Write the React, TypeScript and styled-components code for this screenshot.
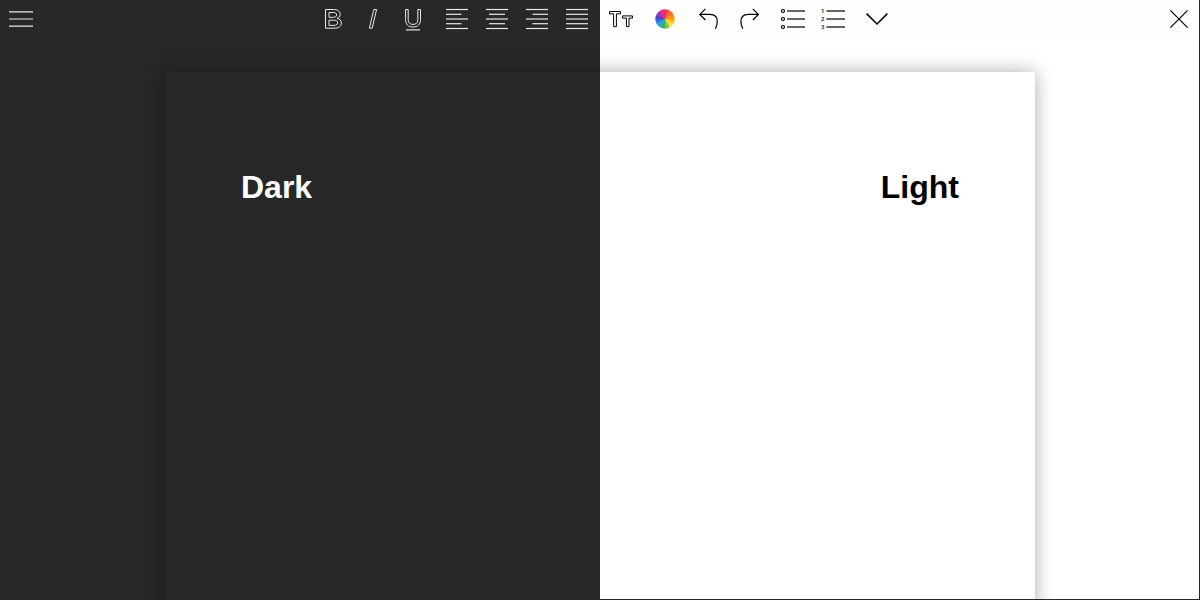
import React from "react";
import styled, { createGlobalStyle, ThemeProvider } from "styled-components";

const dark = { paper: "#282828", bar: "#282828", ink: "#ffffff", icon: "#e8e8e8" };
const light = { paper: "#ffffff", bar: "#fefefe", ink: "#000000", icon: "#000000" };

const GlobalStyle = createGlobalStyle`
  * { box-sizing: border-box; }
  body {
    margin: 0;
    background: #282828;
    font-family: "Liberation Sans", Arial, sans-serif;
  }
`;

const Split = styled.main`
  display: grid;
  grid-template-columns: 1fr 1fr;
  min-height: 100vh;
`;

const Pane = styled.section<{ $side: "start" | "end" }>`
  display: flex;
  flex-direction: column;
  overflow: hidden;
  background: ${({ theme }) => theme.paper};
  border: solid #282828;
  border-width: ${({ $side }) => ($side === "end" ? "0 1px 1px 0" : "0")};
`;

const Toolbar = styled.div<{ $side: "start" | "end" }>`
  display: flex;
  justify-content: space-between;
  padding: ${({ $side }) => ($side === "end" ? "0 0 2px 1px" : "0 3px 2px 1px")};
  background: ${({ theme }) => theme.bar};
`;

const Tools = styled.div`
  display: flex;
  gap: 4px;
`;

const Group = styled.div`
  display: flex;
`;

const ToolButton = styled.button`
  display: flex;
  align-items: center;
  justify-content: center;
  width: 40px;
  height: 38px;
  padding: 0;
  border: 0;
  background: transparent;
  color: ${({ theme }) => theme.icon};
  cursor: pointer;
`;

const Glyph = styled.svg`
  width: 24px;
  height: 24px;
  overflow: visible;
  fill: none;
  stroke: currentColor;
  stroke-width: 1.2;
`;

/* The sheet runs 40px past the split and the bottom edge, so its shadow shows only on the outer sides. */
const Sheet = styled.article<{ $side: "start" | "end" }>`
  flex: 1;
  align-self: ${({ $side }) => ($side === "start" ? "flex-end" : "flex-start")};
  width: 100%;
  max-width: 475px;
  margin: ${({ $side }) => ($side === "start" ? "32px -40px -40px 0" : "32px 0 -40px -40px")};
  padding: ${({ $side }) => ($side === "start" ? "76px 116px 76px 76px" : "76px 76px 76px 116px")};
  background: ${({ theme }) => theme.paper};
  box-shadow: 0 0 18px rgba(0, 0, 0, 0.33);
  text-align: ${({ $side }) => $side};
`;

const Title = styled.h1`
  margin: 21px 0;
  color: ${({ theme }) => theme.ink};
  font-size: 32px;
  font-weight: 700;
  line-height: 37px;
`;

const Digit = styled.text`
  fill: currentColor;
  stroke: none;
  font-family: "Open Sans", sans-serif;
  font-size: 6px;
  font-weight: 600;
`;

type ToolProps = { label: string; children: React.ReactNode };

const Tool = ({ label, children }: ToolProps) => (
  <ToolButton type="button" aria-label={label} title={label}>
    <Glyph viewBox="0 0 24 24" aria-hidden="true">{children}</Glyph>
  </ToolButton>
);

const alignRows = [2.5, 7.3, 12, 16.7, 21.5];
const alignments = [
  { label: "Align left", from: 1, to: 16.5 },
  { label: "Align center", from: 4, to: 20 },
  { label: "Align right", from: 7.5, to: 23 },
  { label: "Justify", from: 1, to: 23 },
];

const wheelColors = [
  "#f4433c", "#ff6a2a", "#ff930f", "#ffb90b", "#ffe03b", "#8bc34a",
  "#35b158", "#1aa5e0", "#2f76e4", "#5a40c0", "#9a30b8", "#e8296f",
];

const wedge = (index: number) => {
  const point = (step: number) => {
    const angle = (step * Math.PI) / 6 - Math.PI / 2;
    return `${12 + 9.5 * Math.cos(angle)} ${12 + 9.5 * Math.sin(angle)}`;
  };
  return `M12 12L${point(index)}A9.5 9.5 0 0 1 ${point(index + 1)}Z`;
};

const listRows = [4, 12, 20];

const DarkPane = () => (
  <ThemeProvider theme={dark}>
    <Pane $side="start">
      <Toolbar $side="start">
        <Tool label="Menu"><path d="M0 4.8H24M0 12H24M0 19.2H24" /></Tool>
        <Tools>
          <Group>
            <Tool label="Bold">
              <g strokeWidth="1">
                <path d="M4.5 2.5H12.3C16.8 2.5 19.2 4.2 19.2 7.2C19.2 9.4 18 10.8 16 11.4C18.8 11.9 20.3 13.5 20.3 16C20.3 19.4 17.6 21.2 13 21.2H4.5Z" />
                <path d="M8 5.5H12.2C14.6 5.5 15.6 6.3 15.6 7.9C15.6 9.5 14.6 10.3 12.2 10.3H8ZM8 13.2H12.6C15.4 13.2 16.6 14 16.6 15.8C16.6 17.6 15.4 18.4 12.6 18.4H8Z" />
              </g>
            </Tool>
            <Tool label="Italic"><path d="M12.8 2.5H15.6L11.2 21.2H8.4Z" strokeWidth="1" /></Tool>
            <Tool label="Underline">
              <path
                d="M4.6 2.5H7.2V12.5C7.2 15.8 8.9 17.4 12 17.4S16.8 15.8 16.8 12.5V2.5H19.5V12.5C19.5 17.4 16.9 20 12 20S4.6 17.4 4.6 12.5Z"
                strokeWidth="1"
              />
              <path d="M5 22.9H19" />
            </Tool>
          </Group>
          <Group>
            {alignments.map(({ label, from, to }) => (
              <Tool key={label} label={label}>
                {alignRows.map((y, i) => (
                  <path key={y} d={i % 2 ? `M${from} ${y}H${to}` : `M1 ${y}H23`} />
                ))}
              </Tool>
            ))}
          </Group>
        </Tools>
      </Toolbar>
      <Sheet $side="start"><Title>Dark</Title></Sheet>
    </Pane>
  </ThemeProvider>
);

const LightPane = () => (
  <ThemeProvider theme={light}>
    <Pane $side="end">
      <Toolbar $side="end">
        <Tools>
          <Tool label="Text size">
            <path
              d="M.5 4.5H11.5V6.8H7.4V19.7H4.6V6.8H.5ZM13.5 8.9H23.5V11.1H20V19.7H17.4V11.1H13.5Z"
              strokeWidth="1"
            />
          </Tool>
          <Tool label="Color">
            {wheelColors.map((color, i) => (
              <path key={color} d={wedge(i)} fill={color} stroke={color} strokeWidth="0.3" />
            ))}
          </Tool>
          <Group>
            <Tool label="Undo">
              <path d="M8.4 1.8L2.8 7.4L8.4 13M2.8 7.4H13C18 7.4 20.3 10.6 20.3 14.6C20.3 17.4 19.6 19.6 18.4 21.8" />
            </Tool>
            <Tool label="Redo">
              <path d="M15.8 1.8L21.4 7.4L15.8 13M21.4 7.4H11.2C6.2 7.4 3.9 10.6 3.9 14.6C3.9 17.4 4.6 19.6 5.8 21.8" />
            </Tool>
          </Group>
          <Group>
            <Tool label="Bulleted list">
              {listRows.map((y) => (
                <React.Fragment key={y}>
                  <circle cx="2" cy={y} r="1.5" />
                  <path d={`M6 ${y}H24`} />
                </React.Fragment>
              ))}
            </Tool>
            <Tool label="Numbered list">
              {listRows.map((y, i) => (
                <React.Fragment key={y}>
                  <Digit x="0" y={y + 1.5}>{i + 1}</Digit>
                  <path d={`M5.4 ${y}H24`} />
                </React.Fragment>
              ))}
            </Tool>
          </Group>
          <Tool label="More"><path d="M1.6 6.6L12 17L22.4 6.6" strokeWidth="1.5" /></Tool>
        </Tools>
        <Tool label="Close"><path d="M3.4 3.4L20.6 20.6M20.6 3.4L3.4 20.6" /></Tool>
      </Toolbar>
      <Sheet $side="end"><Title>Light</Title></Sheet>
    </Pane>
  </ThemeProvider>
);

export default function App() {
  return (
    <>
      <GlobalStyle />
      <Split>
        <DarkPane />
        <LightPane />
      </Split>
    </>
  );
}
